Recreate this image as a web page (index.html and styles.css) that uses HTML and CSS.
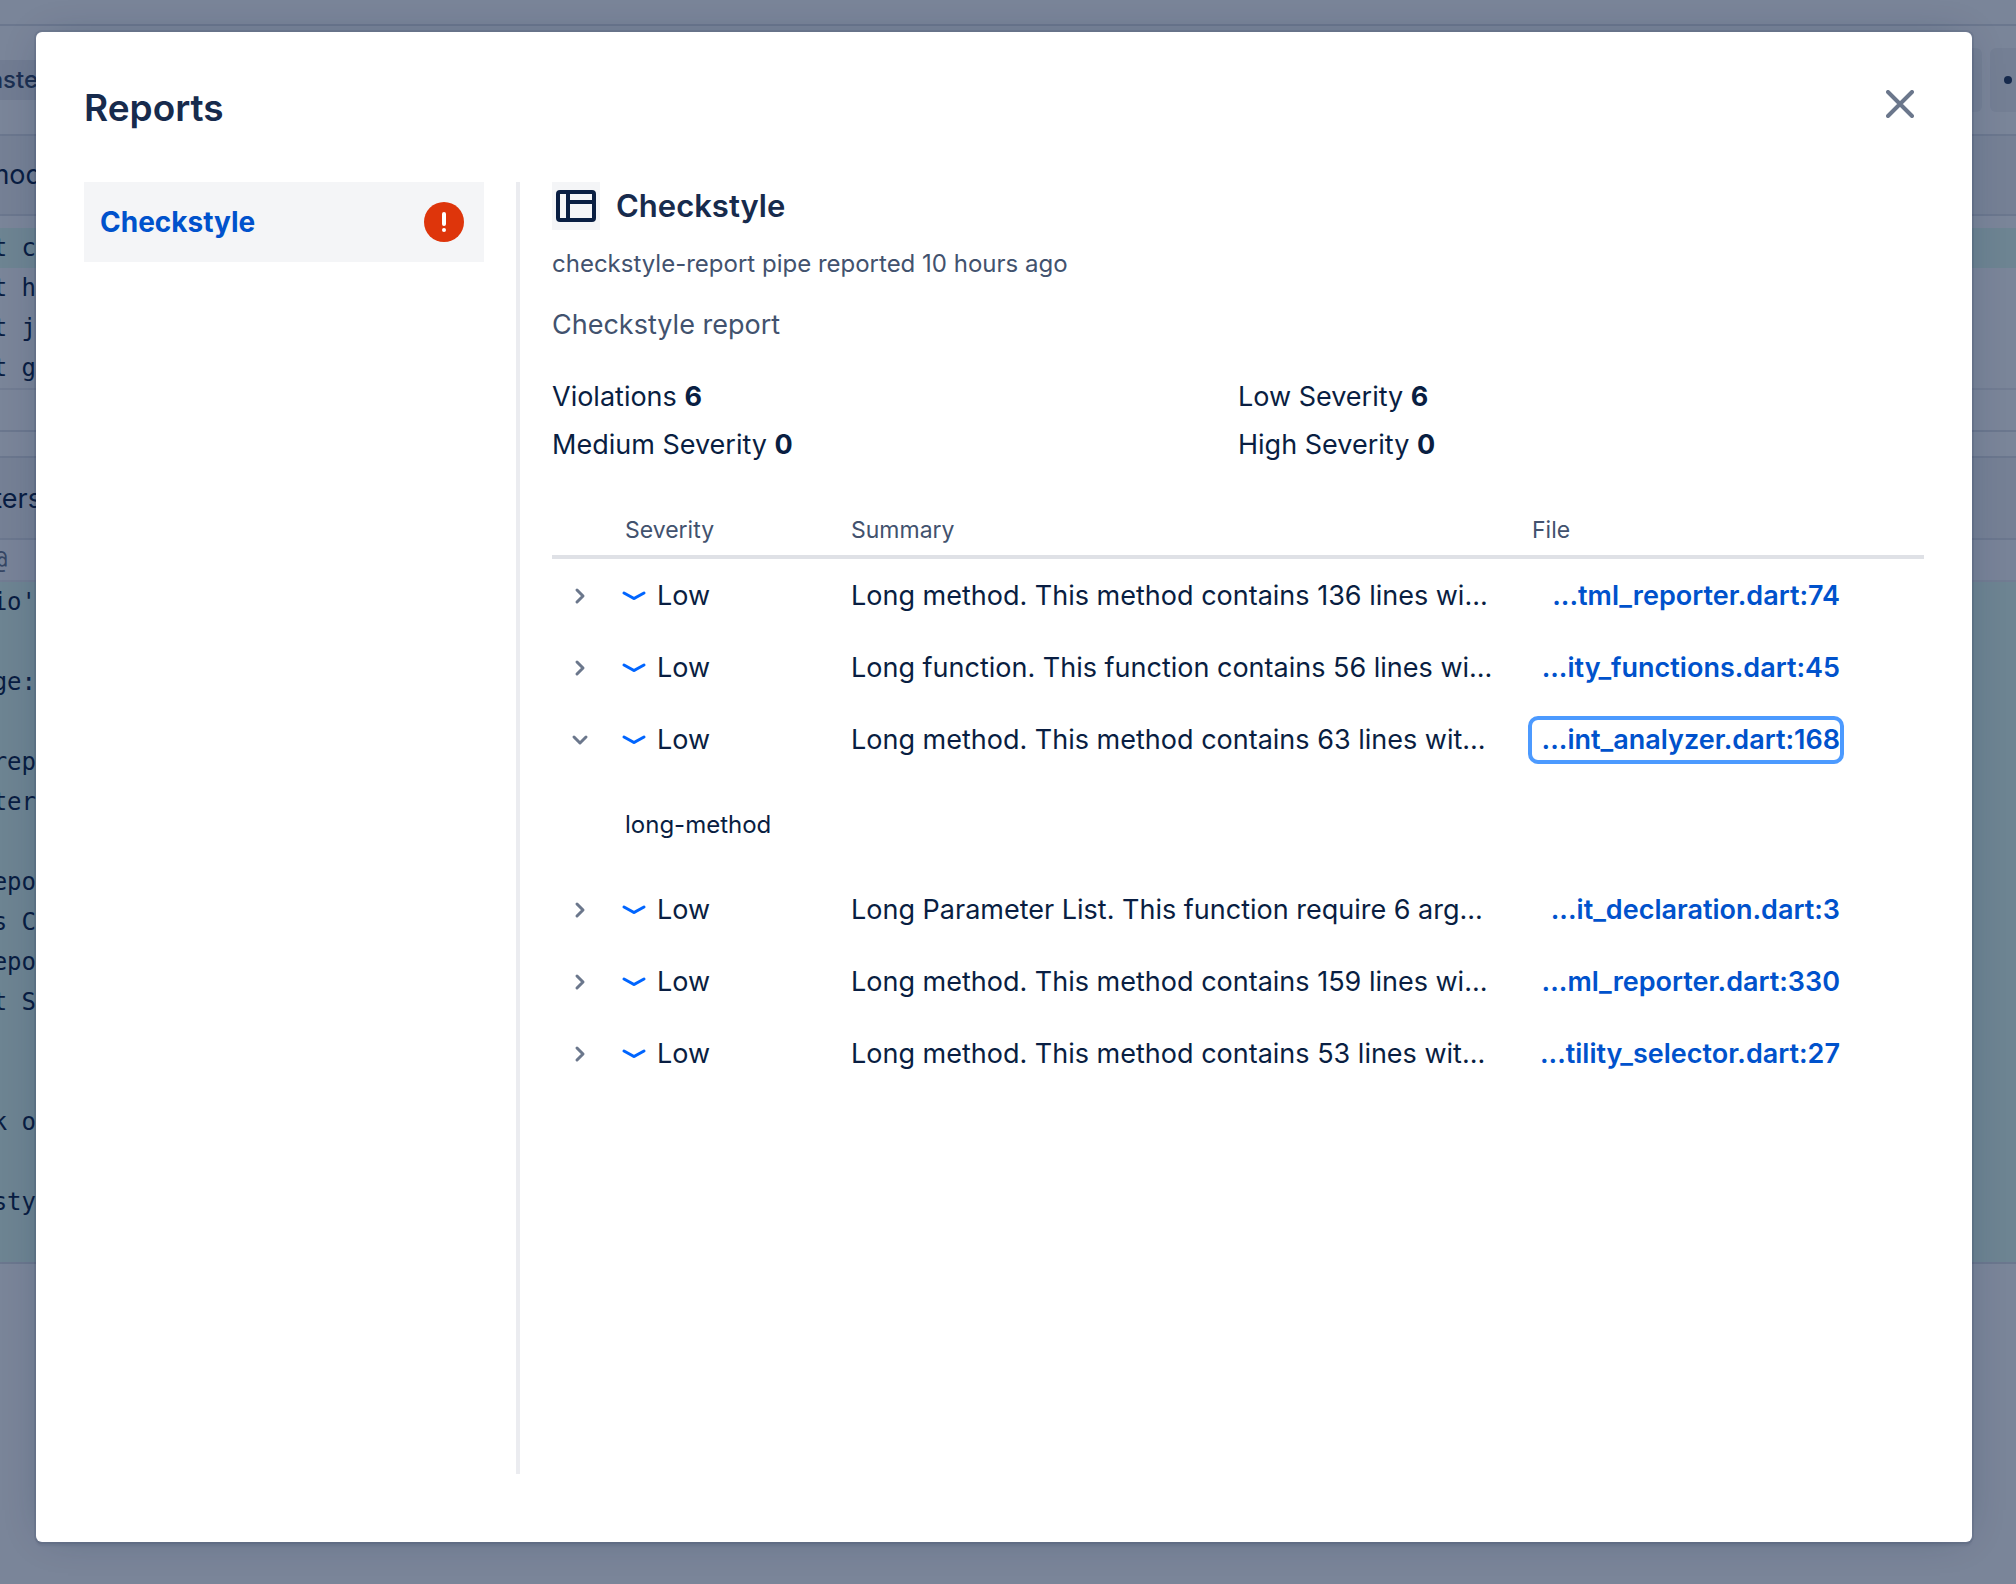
FILE: index.html
```html
<!DOCTYPE html>
<html lang="en">
<head>
<meta charset="utf-8">
<meta name="viewport" content="width=device-width, initial-scale=1">
<title>Reports</title>
<link rel="stylesheet" href="styles.css">
</head>
<body>
<div class="page" inert>
  <div class="page-top"></div>
  <div class="branch-bar">
    <span class="branch">maste</span>
    <div class="branch-actions">
      <button class="action action-wide" type="button" aria-label="Action"></button>
      <button class="action" type="button" aria-label="More"><svg width="36" height="8" viewBox="0 0 36 8"><circle cx="4" cy="4" r="4"/><circle cx="18" cy="4" r="4"/><circle cx="32" cy="4" r="4"/></svg></button>
    </div>
  </div>
  <section class="diff">
    <h2 class="diff-head"><span>mod</span></h2>
    <div class="diff-gap"></div>
    <pre class="code added"><span>t c</span></pre>
    <pre class="code"><span>t h</span></pre>
    <pre class="code"><span>t j</span></pre>
    <pre class="code"><span>t g</span></pre>
    <div class="diff-foot"></div>
  </section>
  <section class="diff">
    <h2 class="diff-head"><span>ters</span></h2>
    <pre class="code hunk"><span>@  </span></pre>
    <pre class="code added"><span>io'</span></pre>
    <pre class="code added"></pre>
    <pre class="code added"><span>ge:</span></pre>
    <pre class="code added"></pre>
    <pre class="code added"><span>rep</span></pre>
    <pre class="code added"><span>ter</span></pre>
    <pre class="code added"></pre>
    <pre class="code added"><span>epo</span></pre>
    <pre class="code added"><span>s C</span></pre>
    <pre class="code added"><span>epo</span></pre>
    <pre class="code added"><span>t S</span></pre>
    <pre class="code added"></pre>
    <pre class="code added"></pre>
    <pre class="code added"><span>k o</span></pre>
    <pre class="code added"></pre>
    <pre class="code added"><span>sty</span></pre>
    <pre class="code added"></pre>
  </section>
</div>

<div class="blanket">
  <div class="modal" role="dialog" aria-modal="true" aria-labelledby="modal-title">
    <header class="modal-head">
      <h1 id="modal-title">Reports</h1>
      <button class="close" type="button" aria-label="Close"><svg width="28" height="28" viewBox="0 0 28 28"><path d="M2 2l24 24M26 2L2 26"/></svg></button>
    </header>
    <div class="modal-body">
      <nav class="report-nav" aria-label="Reports">
        <a class="report-link" href="#checkstyle">Checkstyle
          <svg width="40" height="40" viewBox="0 0 40 40" role="img" aria-label="Failed"><circle cx="20" cy="20" r="20" fill="#de350b"/><path d="M20 12v10" stroke="#fff" stroke-width="4" stroke-linecap="round"/><circle cx="20" cy="28" r="2" fill="#fff"/></svg>
        </a>
      </nav>
      <main class="report" id="checkstyle">
        <div class="report-title">
          <span class="report-icon"><svg width="40" height="32" viewBox="0 0 40 32"><rect x="2" y="2" width="36" height="28" rx="2"/><path d="M12 2v28M12 12h26"/></svg></span>
          <h2>Checkstyle</h2>
        </div>
        <p class="reported">checkstyle-report pipe reported 10 hours ago</p>
        <p class="details">Checkstyle report</p>
        <div class="stats">
          <div>Violations <b>6</b></div>
          <div>Low Severity <b>6</b></div>
          <div>Medium Severity <b>0</b></div>
          <div>High Severity <b>0</b></div>
        </div>
        <table class="issues">
          <colgroup><col class="col-toggle"><col class="col-severity"><col><col class="col-file"></colgroup>
          <thead>
            <tr><th></th><th scope="col">Severity</th><th scope="col">Summary</th><th scope="col">File</th></tr>
          </thead>
          <tbody>
            <tr>
              <td><button class="toggle" type="button" aria-label="Expand" aria-expanded="false"><svg width="24" height="20" viewBox="0 0 24 20"><path d="M9 4l6 6-6 6"/></svg></button></td>
              <td><span class="severity"><svg width="22" height="10" viewBox="0 0 22 10"><path d="M1 2l9 5q1 1 2 0l9-5"/></svg>Low</span></td>
              <td>Long method. This method contains 136 lines wi...</td>
              <td><a class="file" href="#f1">...tml_reporter.dart:74</a></td>
            </tr>
            <tr>
              <td><button class="toggle" type="button" aria-label="Expand" aria-expanded="false"><svg width="24" height="20" viewBox="0 0 24 20"><path d="M9 4l6 6-6 6"/></svg></button></td>
              <td><span class="severity"><svg width="22" height="10" viewBox="0 0 22 10"><path d="M1 2l9 5q1 1 2 0l9-5"/></svg>Low</span></td>
              <td>Long function. This function contains 56 lines wi...</td>
              <td><a class="file" href="#f2">...ity_functions.dart:45</a></td>
            </tr>
            <tr>
              <td><button class="toggle" type="button" aria-label="Collapse" aria-expanded="true"><svg width="24" height="20" viewBox="0 0 24 20"><path d="M6 7l6 6 6-6"/></svg></button></td>
              <td><span class="severity"><svg width="22" height="10" viewBox="0 0 22 10"><path d="M1 2l9 5q1 1 2 0l9-5"/></svg>Low</span></td>
              <td>Long method. This method contains 63 lines wit...</td>
              <td><a class="file focused" href="#f3">...int_analyzer.dart:168</a></td>
            </tr>
            <tr class="expanded">
              <td></td>
              <td colspan="3">long-method</td>
            </tr>
            <tr>
              <td><button class="toggle" type="button" aria-label="Expand" aria-expanded="false"><svg width="24" height="20" viewBox="0 0 24 20"><path d="M9 4l6 6-6 6"/></svg></button></td>
              <td><span class="severity"><svg width="22" height="10" viewBox="0 0 22 10"><path d="M1 2l9 5q1 1 2 0l9-5"/></svg>Low</span></td>
              <td>Long Parameter List. This function require 6 arg...</td>
              <td><a class="file" href="#f4">...it_declaration.dart:3</a></td>
            </tr>
            <tr>
              <td><button class="toggle" type="button" aria-label="Expand" aria-expanded="false"><svg width="24" height="20" viewBox="0 0 24 20"><path d="M9 4l6 6-6 6"/></svg></button></td>
              <td><span class="severity"><svg width="22" height="10" viewBox="0 0 22 10"><path d="M1 2l9 5q1 1 2 0l9-5"/></svg>Low</span></td>
              <td>Long method. This method contains 159 lines wi...</td>
              <td><a class="file" href="#f5">...ml_reporter.dart:330</a></td>
            </tr>
            <tr>
              <td><button class="toggle" type="button" aria-label="Expand" aria-expanded="false"><svg width="24" height="20" viewBox="0 0 24 20"><path d="M9 4l6 6-6 6"/></svg></button></td>
              <td><span class="severity"><svg width="22" height="10" viewBox="0 0 22 10"><path d="M1 2l9 5q1 1 2 0l9-5"/></svg>Low</span></td>
              <td>Long method. This method contains 53 lines wit...</td>
              <td><a class="file" href="#f6">...tility_selector.dart:27</a></td>
            </tr>
          </tbody>
        </table>
      </main>
    </div>
  </div>
</div>
</body>
</html>
```
FILE: styles.css
```css
* { box-sizing: border-box; }

body {
  margin: 0;
  font-family: Inter, "Liberation Sans", sans-serif;
  font-size: 27px;
  line-height: 40px;
  color: #091e42;
  background: #fff;
}

h1, h2, p, pre { margin: 0; }

button {
  border: 0;
  padding: 0;
  background: none;
  font: inherit;
  color: inherit;
}

svg { display: block; flex: none; }

/* Pull request page behind the dialog */

.page { overflow: hidden; }

.page-top {
  height: 26px;
  border-bottom: 2px solid #dfe1e6;
}

.branch-bar {
  display: flex;
  justify-content: space-between;
  align-items: center;
  height: 110px;
  border-bottom: 2px solid #dfe1e6;
}

.branch {
  display: flex;
  justify-content: flex-end;
  width: 38px;
  background: #ebecf0;
  color: #344563;
  font-size: 24px;
  font-weight: 500;
}

.branch-actions { display: flex; gap: 8px; margin-right: -38px; }

.action {
  display: flex;
  align-items: center;
  justify-content: center;
  width: 64px;
  height: 64px;
  border-radius: 6px;
  background: #f1f2f5;
  fill: #253858;
}

.action-wide { width: 120px; }

.diff { border-bottom: 2px solid #dfe1e6; }
.diff + .diff { margin-top: 24px; border-top: 2px solid #dfe1e6; }

.diff-head {
  height: 80px;
  padding-top: 19px;
  border-bottom: 2px solid #dfe1e6;
  background: #f4f5f7;
  font-size: 27px;
  font-weight: 400;
}

.diff + .diff .diff-head { height: 82px; padding-top: 21px; }

.diff-head span {
  display: flex;
  justify-content: flex-end;
  width: 42px;
}

.diff-gap { height: 12px; }

.code {
  height: 40px;
  font-family: "DejaVu Sans Mono", monospace;
  font-size: 24px;
}

.code.added { background: #e3fcef; }

.code span {
  display: flex;
  justify-content: flex-end;
  width: 36px;
}

.code.hunk {
  height: 42px;
  border-bottom: 2px solid #ebecf0;
  color: #6b778c;
  background: #fafbfc;
}

.diff-foot { height: 42px; border-top: 2px solid #ebecf0; }

/* Dialog */

.blanket {
  position: absolute;
  inset: 0;
  display: flex;
  min-height: 100vh;
  padding: 32px 44px 42px 36px;
  background: rgba(9, 30, 66, 0.54);
}

.modal {
  display: flex;
  flex-direction: column;
  flex: 1;
  min-width: 0;
  padding: 48px 48px 68px;
  border-radius: 6px;
  background: #fff;
  box-shadow: 0 0 0 2px rgba(9, 30, 66, 0.08), 0 4px 2px rgba(9, 30, 66, 0.08), 0 0 40px -12px rgba(9, 30, 66, 0.31);
}

.modal-head {
  display: flex;
  justify-content: space-between;
  height: 102px;
}

.modal-head h1 {
  padding-top: 8px;
  font-size: 37px;
  font-weight: 600;
  line-height: 40px;
  color: #172b4d;
}

.close {
  display: flex;
  align-items: center;
  justify-content: center;
  width: 48px;
  height: 48px;
}

.close svg {
  fill: none;
  stroke: #6b778c;
  stroke-width: 4;
  stroke-linecap: round;
}

.modal-body { display: flex; flex: 1; }

.report-nav {
  flex: none;
  width: 436px;
  padding-right: 32px;
  border-right: 4px solid #ebecf0;
}

.report-link {
  display: flex;
  align-items: center;
  justify-content: space-between;
  height: 80px;
  padding: 0 20px 0 16px;
  background: #f4f5f7;
  color: #0052cc;
  font-size: 28px;
  font-weight: 700;
  text-decoration: none;
}

.report { flex: 1; min-width: 0; padding-left: 32px; }

.report-title { display: flex; align-items: center; gap: 16px; }

.report-icon {
  display: flex;
  align-items: center;
  justify-content: center;
  width: 48px;
  height: 48px;
  background: #f4f5f7;
}

.report-icon svg { fill: none; stroke: #091e42; stroke-width: 4; }

.report-title h2 { font-size: 31px; font-weight: 600; color: #172b4d; }

.reported { padding-top: 14px; font-size: 24px; color: #42526e; }

.details { padding-top: 21px; color: #42526e; }

.stats {
  display: grid;
  grid-template-columns: 1fr 1fr;
  row-gap: 8px;
  padding-top: 32px;
}

.issues {
  width: 100%;
  margin-top: 31px;
  table-layout: fixed;
  border-collapse: separate;
  border-spacing: 0;
}

.col-toggle { width: 57px; }
.col-severity { width: 226px; }
.col-file { width: 408px; }

.issues th {
  height: 63px;
  padding: 8px 0 0 16px;
  border-bottom: 4px solid #dfe1e6;
  text-align: left;
  font-size: 23px;
  font-weight: 400;
  color: #42526e;
}

.issues td { height: 72px; padding: 2px 0 0 16px; white-space: nowrap; }

.issues .expanded td { height: 98px; font-size: 24px; }

.toggle { display: block; }
.toggle svg { fill: none; stroke: #6b778c; stroke-width: 3; stroke-linecap: round; stroke-linejoin: round; }

.severity { display: flex; align-items: center; gap: 12px; margin-left: -2px; }
.severity svg { overflow: visible; fill: none; stroke: #0065ff; stroke-width: 3; stroke-linecap: round; }

.file {
  display: block;
  width: 308px;
  text-align: right;
  font-weight: 600;
  color: #0052cc;
  text-decoration: none;
}

.file.focused { border-radius: 6px; outline: 4px solid #4c9aff; }
```
